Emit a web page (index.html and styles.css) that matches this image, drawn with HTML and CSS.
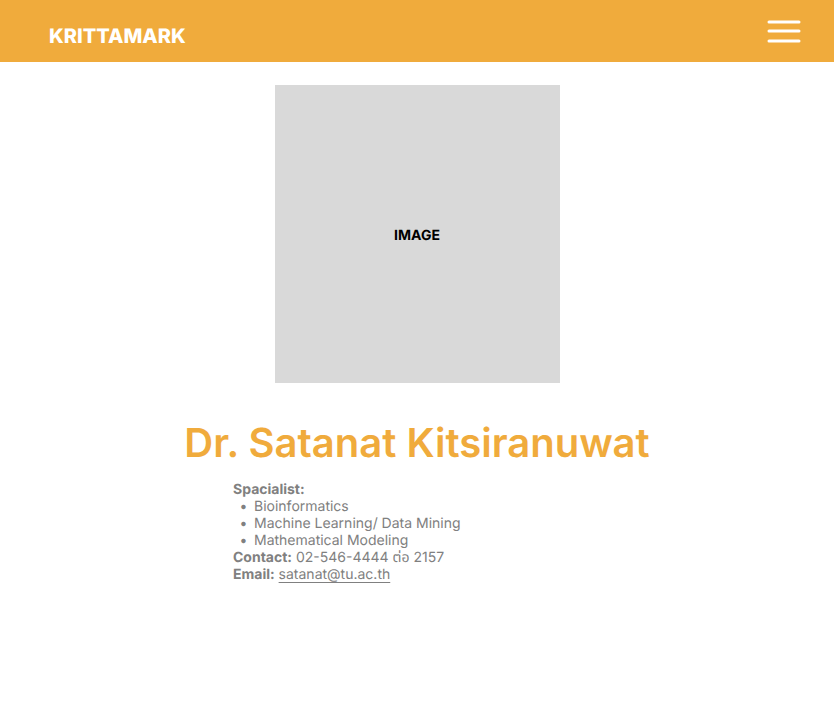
FILE: index.html
```html
<!DOCTYPE html>
<html lang="en">
<head>
<meta charset="utf-8">
<title>Krittamark</title>
<link rel="stylesheet" href="styles.css">
</head>
<body>
<header class="topbar">
  <a class="brand" href="#">KRITTAMARK</a>
  <button class="menu" type="button" aria-label="Menu">
    <svg width="34" height="24" viewBox="0 0 34 24" fill="none" stroke="#fff" stroke-width="3" stroke-linecap="round"><path d="M2 3H32M2 12H32M2 22H32"/></svg>
  </button>
</header>
<main class="profile">
  <div class="photo">IMAGE</div>
  <h1 class="name">Dr. Satanat Kitsiranuwat</h1>
  <section class="details">
    <p><strong>Spacialist:</strong></p>
    <ul>
      <li>Bioinformatics</li>
      <li>Machine Learning/ Data Mining</li>
      <li>Mathematical Modeling</li>
    </ul>
    <p><strong>Contact:</strong> 02-546-4444 ต่อ 2157</p>
    <p><strong>Email:</strong> <a href="mailto:satanat@tu.ac.th">satanat@tu.ac.th</a></p>
  </section>
</main>
</body>
</html>
```
FILE: styles.css
```css
* { box-sizing: border-box; }
body { margin: 0; background: #fff; font-family: Inter, "Noto Sans Thai", sans-serif; text-rendering: geometricPrecision; }
.topbar { display: flex; justify-content: space-between; align-items: center; height: 62px; padding: 0 33px 0 49px; background: #f0ab3c; }
.brand { padding-top: 10px; color: #fff; font-size: 20px; line-height: 24px; font-weight: 800; text-decoration: none; }
.menu { padding: 0; border: 0; background: none; cursor: pointer; }
.menu svg { display: block; }
.profile { display: flex; flex-direction: column; align-items: center; padding: 23px 16px; }
.photo { display: flex; align-items: center; justify-content: center; width: 285px; max-width: 100%; height: 298px; padding-top: 2px; background: #d9d9d9; color: #000; font-size: 14px; line-height: 17px; font-weight: 700; }
.name { margin: 36px 0 14px; color: #f0ab3c; font-size: 40px; line-height: 48px; font-weight: 600; text-align: center; }
.details { width: 368px; max-width: 100%; color: #808080; font-size: 14px; line-height: 17px; }
.details p, .details ul { margin: 0; }
.details ul { padding: 0; list-style: none; }
.details li { display: flex; }
.details li::before { content: "•"; flex: none; width: 21px; text-align: center; }
.details a { color: inherit; text-underline-offset: 3px; }
```
